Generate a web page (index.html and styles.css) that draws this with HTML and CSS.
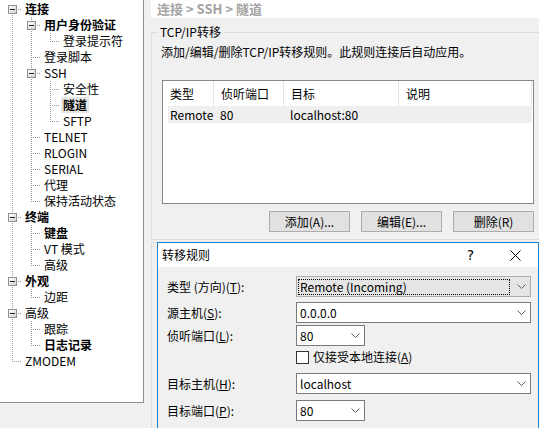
FILE: index.html
```html
<!DOCTYPE html>
<html lang="zh-CN">
<head>
<meta charset="utf-8">
<title>隧道</title>
<link rel="stylesheet" href="styles.css">
</head>
<body>
<div class="app">
  <div class="tree">
    <div class="row"><span class="g f"><i class="box"></i></span><span class="lb b">连接</span></div>
    <div class="row"><span class="g v"></span><span class="g t"><i class="box"></i></span><span class="lb b">用户身份验证</span></div>
    <div class="row"><span class="g v"></span><span class="g v"></span><span class="g l"></span><span class="lb">登录提示符</span></div>
    <div class="row"><span class="g v"></span><span class="g t"></span><span class="lb">登录脚本</span></div>
    <div class="row"><span class="g v"></span><span class="g t"><i class="box"></i></span><span class="lb">SSH</span></div>
    <div class="row"><span class="g v"></span><span class="g v"></span><span class="g t"></span><span class="lb">安全性</span></div>
    <div class="row"><span class="g v"></span><span class="g v"></span><span class="g t"></span><span class="lb b sel">隧道</span></div>
    <div class="row"><span class="g v"></span><span class="g v"></span><span class="g l"></span><span class="lb">SFTP</span></div>
    <div class="row"><span class="g v"></span><span class="g t"></span><span class="lb">TELNET</span></div>
    <div class="row"><span class="g v"></span><span class="g t"></span><span class="lb">RLOGIN</span></div>
    <div class="row"><span class="g v"></span><span class="g t"></span><span class="lb">SERIAL</span></div>
    <div class="row"><span class="g v"></span><span class="g t"></span><span class="lb">代理</span></div>
    <div class="row"><span class="g v"></span><span class="g l"></span><span class="lb">保持活动状态</span></div>
    <div class="row"><span class="g t"><i class="box"></i></span><span class="lb b">终端</span></div>
    <div class="row"><span class="g v"></span><span class="g t"></span><span class="lb b">键盘</span></div>
    <div class="row"><span class="g v"></span><span class="g t"></span><span class="lb">VT 模式</span></div>
    <div class="row"><span class="g v"></span><span class="g l"></span><span class="lb">高级</span></div>
    <div class="row"><span class="g t"><i class="box"></i></span><span class="lb b">外观</span></div>
    <div class="row"><span class="g v"></span><span class="g l"></span><span class="lb">边距</span></div>
    <div class="row"><span class="g t"><i class="box"></i></span><span class="lb">高级</span></div>
    <div class="row"><span class="g v"></span><span class="g t"></span><span class="lb">跟踪</span></div>
    <div class="row"><span class="g v"></span><span class="g l"></span><span class="lb b">日志记录</span></div>
    <div class="row"><span class="g l"></span><span class="lb">ZMODEM</span></div>
  </div>

  <div class="main">
    <div class="crumb">连接 &gt; SSH &gt; 隧道</div>
    <fieldset class="group">
      <legend>TCP/IP转移</legend>
      <p class="desc">添加/编辑/删除TCP/IP转移规则。此规则连接后自动应用。</p>
      <div class="list">
        <div class="lh">
          <span class="hc c1">类型</span>
          <span class="hc c2">侦听端口</span>
          <span class="hc c3">目标</span>
          <span class="hc c4">说明</span>
        </div>
        <div class="lr">
          <span class="lc1">Remote</span>
          <span class="lc2">80</span>
          <span class="lc3">localhost:80</span>
          <span class="lc4"></span>
        </div>
      </div>
      <div class="btns">
        <button class="btn" type="button">添加(A)...</button>
        <button class="btn" type="button">编辑(E)...</button>
        <button class="btn" type="button">删除(R)</button>
      </div>
    </fieldset>
    <div class="group2"></div>
  </div>
</div>

<div class="dlg">
  <div class="tb">
    <span class="ttl">转移规则</span>
    <div class="cap">
      <span class="cbtn help">?</span>
      <span class="cbtn close"><svg width="11" height="11" viewBox="0 0 11 11"><path d="M0.5 0.5 L10.5 10.5 M10.5 0.5 L0.5 10.5" stroke="#000" stroke-width="1" fill="none"/></svg></span>
    </div>
  </div>
  <div class="form">
    <div class="fr">
      <span class="fl">类型 (方向)(<u>T</u>):</span>
      <div class="combo big sel"><span class="focus">Remote (Incoming)</span><svg class="chev" width="9" height="5" viewBox="0 0 9 5"><path d="M0.5 0.5 L4.5 4.5 L8.5 0.5" fill="none" stroke="#606060"/></svg></div>
    </div>
    <div class="fr f-src">
      <span class="fl">源主机(<u>S</u>):</span>
      <div class="combo big"><span class="val">0.0.0.0</span><svg class="chev" width="9" height="5" viewBox="0 0 9 5"><path d="M0.5 0.5 L4.5 4.5 L8.5 0.5" fill="none" stroke="#606060"/></svg></div>
    </div>
    <div class="fr f-port">
      <span class="fl">侦听端口(<u>L</u>):</span>
      <div class="combo small"><span class="val">80</span><svg class="chev" width="9" height="5" viewBox="0 0 9 5"><path d="M0.5 0.5 L4.5 4.5 L8.5 0.5" fill="none" stroke="#606060"/></svg></div>
    </div>
    <div class="fr f-chk">
      <span class="fl"></span>
      <span class="chk"></span>
      <span class="chkl">仅接受本地连接(<u>A</u>)</span>
    </div>
    <div class="fr f-host">
      <span class="fl">目标主机(<u>H</u>):</span>
      <div class="combo big"><span class="val">localhost</span><svg class="chev" width="9" height="5" viewBox="0 0 9 5"><path d="M0.5 0.5 L4.5 4.5 L8.5 0.5" fill="none" stroke="#606060"/></svg></div>
    </div>
    <div class="fr f-dport">
      <span class="fl">目标端口(<u>P</u>):</span>
      <div class="combo small"><span class="val">80</span><svg class="chev" width="9" height="5" viewBox="0 0 9 5"><path d="M0.5 0.5 L4.5 4.5 L8.5 0.5" fill="none" stroke="#606060"/></svg></div>
    </div>
  </div>
</div>
</body>
</html>
```

FILE: styles.css
```css
* { box-sizing: border-box; }
html, body { margin: 0; padding: 0; }
body {
  width: 539px;
  height: 428px;
  overflow: hidden;
  position: relative;
  background: #f0f0f0;
  font-family: "Noto Sans CJK SC", "Noto Sans", sans-serif;
  font-size: 12px;
  color: #000;
  --dv: repeating-linear-gradient(to bottom, #9a9a9a 0 1px, transparent 1px 2px);
  --dh: repeating-linear-gradient(to right, #9a9a9a 0 1px, transparent 1px 2px);
}

.app { display: flex; align-items: flex-start; }

/* ---------- tree ---------- */
.tree {
  flex: none;
  width: 144px;
  height: 403px;
  background: #fff;
  border-right: 1px solid #8e8e8e;
  border-bottom: 1px solid #8e8e8e;
  padding: 1px 0 0 3px;
}
.row { display: flex; height: 16px; }
.g { flex: none; display: block; width: 19px; height: 16px; }
.g.v { background: var(--dv) 9px 0 / 1px 16px no-repeat; }
.g.t { background: var(--dv) 9px 0 / 1px 16px no-repeat, var(--dh) 9px 8px / 10px 1px no-repeat; }
.g.l { background: var(--dv) 9px 0 / 1px 8px no-repeat, var(--dh) 9px 8px / 10px 1px no-repeat; }
.g.f { background: var(--dv) 9px 8px / 1px 8px no-repeat, var(--dh) 9px 8px / 10px 1px no-repeat; }
.box {
  display: block;
  width: 9px;
  height: 9px;
  margin: 4px 0 0 5px;
  border: 1px solid #919191;
  background:
    linear-gradient(#222, #222) 1px 3px / 5px 1px no-repeat,
    linear-gradient(135deg, #ffffff, #d2d2d2);
}
.lb {
  display: block;
  margin-left: 1px;
  padding: 0 2px;
  line-height: 16px;
  white-space: nowrap;
}
.lb.b { font-weight: bold; }
.lb.sel { background: #e6e6e6; }

/* ---------- main pane ---------- */
.main { flex: 1; min-width: 0; padding-left: 7px; }
.crumb {
  height: 18px;
  background: #fff;
  padding-left: 6px;
  line-height: 18px;
  color: #a3a3a3;
  font-weight: bold;
  font-size: 13px;
  white-space: nowrap;
}
.group {
  margin: 6px -8px 0 0;
  padding: 0 0 7px 9px;
  border: 1px solid #dcdcdc;
  min-width: 0;
}
.group legend {
  padding: 0 2px;
  margin-left: -3px;
  line-height: 16px;
}
.desc { margin: 4px 0 0; line-height: 16px; white-space: nowrap; }
.list {
  margin: 20px 0 0 1px;
  width: 372px;
  height: 124px;
  border: 1px solid #828790;
  background: #fff;
}
.lh { display: flex; height: 25px; }
.hc {
  display: block;
  flex: none;
  border-right: 1px solid #e5e5e5;
  padding-left: 7px;
  line-height: 25px;
  white-space: nowrap;
}
.c1 { width: 51px; }
.c2 { width: 70px; }
.c3 { width: 115px; }
.c4 { width: 133px; }
.lr {
  display: flex;
  width: 364px;
  height: 17px;
  margin-left: 5px;
  background: #efefef;
  line-height: 17px;
  white-space: nowrap;
}
.lr span { display: block; flex: none; }
.lc1 { width: 45px; padding-left: 2px; }
.lc2 { width: 70px; padding-left: 7px; }
.lc3 { width: 115px; padding-left: 7px; }
.lr .lc4 { flex: 1; }
.btns {
  display: flex;
  justify-content: flex-end;
  gap: 11px;
  width: 372px;
  margin: 7px 0 0 1px;
}
.btn {
  width: 81px;
  height: 21px;
  padding: 0;
  border: 1px solid #adadad;
  background: #e1e1e1;
  font: inherit;
  color: #000;
  line-height: 19px;
  text-align: center;
}
.group2 {
  margin: 2px -8px 0 0;
  height: 200px;
  border-top: 1px solid #dcdcdc;
  border-left: 1px solid #dcdcdc;
}

/* ---------- dialog window ---------- */
.dlg {
  position: absolute;
  left: 157px;
  top: 242px;
  width: 382px;
  height: 200px;
  border: 1px solid #1883d7;
  background: #f0f0f0;
}
.tb {
  display: flex;
  align-items: center;
  height: 24px;
  background: #fff;
  padding-left: 4px;
}
.ttl { line-height: 16px; }
.cap { margin-left: auto; display: flex; }
.cbtn {
  display: flex;
  align-items: center;
  justify-content: center;
  width: 45px;
  height: 24px;
}
.help { font-family: "DejaVu Sans", sans-serif; font-size: 14px; }
.form { padding: 9px 0 0 9px; }
.fr { display: flex; align-items: center; height: 21px; }
.fr.f-src { margin-top: 5px; }
.fr.f-port { margin-top: 2px; }
.fr.f-chk { margin-top: 3px; height: 16px; }
.fr.f-host { margin-top: 8px; }
.fr.f-dport { margin-top: 6px; }
.fl { flex: none; width: 129px; line-height: 16px; white-space: nowrap; }
.combo {
  display: flex;
  align-items: center;
  height: 21px;
  border: 1px solid #7a7a7a;
  background: #fff;
  padding-left: 3px;
}
.combo.big { width: 235px; }
.combo.small { width: 69px; }
.combo.sel {
  background: #e5e5e5;
  border-color: #adadad;
  padding-left: 1px;
}
.focus {
  display: block;
  flex: none;
  width: 212px;
  height: 16px;
  border: 1px dotted #000;
  padding-left: 1px;
  line-height: 14px;
  white-space: nowrap;
}
.val { line-height: 16px; white-space: nowrap; }
.chev { margin-left: auto; margin-right: 4px; flex: none; }
.chk {
  display: block;
  flex: none;
  width: 13px;
  height: 13px;
  border: 1px solid #333;
  background: #fff;
}
.chkl { margin-left: 4px; line-height: 16px; white-space: nowrap; }
```
